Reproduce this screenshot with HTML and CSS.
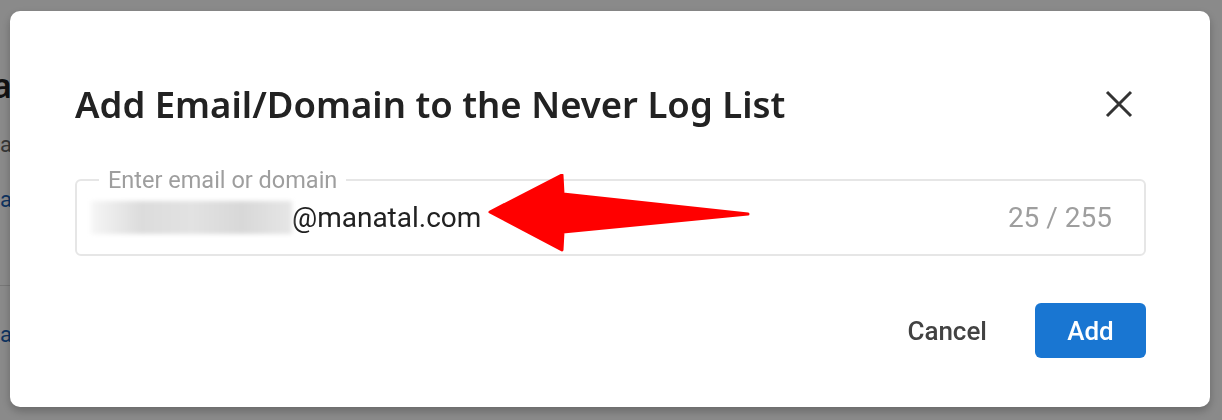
FILE: index.html
```html
<!DOCTYPE html>
<html lang="en">
<head>
  <meta charset="UTF-8" />
  <meta name="viewport" content="width=device-width, initial-scale=1" />
  <title>Never Log List</title>
  <link rel="stylesheet" href="styles.css">
</head>
<body>
  <!-- Page behind the dialog -->
  <div class="page">
    <div class="page-edge">
      <div class="edge-row edge-title"><span>Never Log Data</span></div>
      <div class="edge-row edge-sub"><span>Emails never logged to data</span></div>
      <div class="edge-row edge-link"><span>Learn more idea</span></div>
      <div class="edge-rule"></div>
      <div class="edge-row edge-link edge-cell"><span>manata</span></div>
      <div class="edge-rule"></div>
    </div>
  </div>

  <div class="backdrop">
    <div class="dialog" role="dialog" aria-labelledby="dialogTitle">
      <div class="dialog-head">
        <h2 id="dialogTitle">Add Email/Domain to the Never Log List</h2>
        <button type="button" class="close-btn" aria-label="Close">
          <svg width="28" height="28" viewBox="0 0 28 28">
            <path d="M2 2 L26 26 M26 2 L2 26" stroke="#333" stroke-width="3" fill="none" />
          </svg>
        </button>
      </div>

      <fieldset class="field">
        <legend>Enter email or domain</legend>
        <div class="field-row">
          <span class="field-value"><span class="masked"></span>@manatal.com</span>
          <span class="counter">25 / 255</span>
        </div>
        <svg class="pointer" width="270" height="84" viewBox="0 0 270 84">
          <polygon points="6,38 78,1 79,20 264,40 79,58 78,76" fill="#ff0000" stroke="#ff0000" stroke-width="3" stroke-linejoin="round" />
        </svg>
      </fieldset>

      <div class="dialog-actions">
        <button type="button" class="btn-text">Cancel</button>
        <button type="submit" class="btn-primary">Add</button>
      </div>
    </div>
  </div>
</body>
</html>
```

FILE: styles.css
```css
/* Base */
html, body {
  margin: 0;
  height: 100%;
}
body {
  font-family: Roboto, "Noto Sans", Arial, sans-serif;
  background-color: #fff;
  overflow: hidden;
}

/* Page content sticking out at the left edge */
.page {
  height: 100%;
}
.page-edge {
  width: 12px;
  overflow: hidden;
  padding-top: 62px;
}
.edge-row {
  display: flex;
  justify-content: flex-end;
  white-space: nowrap;
}
.edge-title {
  font-family: "Noto Sans", sans-serif;
  font-weight: 600;
  font-size: 34px;
  color: #222;
  height: 46px;
  line-height: 46px;
}
.edge-sub {
  font-size: 22px;
  color: #666;
  margin-top: 20px;
  height: 34px;
  line-height: 34px;
}
.edge-link {
  font-size: 22px;
  color: #1a5fb4;
  margin-top: 21px;
  height: 34px;
  line-height: 34px;
}
.edge-rule {
  height: 1px;
  background-color: #ddd;
  margin-top: 68px;
}
.edge-cell {
  margin-top: 32px;
  margin-bottom: 25px;
}

/* Dim layer and dialog */
.backdrop {
  position: fixed;
  inset: 0;
  background-color: rgba(0, 0, 0, 0.46);
}
.dialog {
  position: absolute;
  left: 10px;
  top: 11px;
  width: 1200px;
  height: 396px;
  box-sizing: border-box;
  background-color: #fff;
  border-radius: 10px;
  padding: 0 64px 0 65px;
  box-shadow: 0 4px 10px rgba(0, 0, 0, 0.25);
}
.dialog-head {
  display: flex;
  align-items: center;
  justify-content: space-between;
  height: 165px;
  padding-top: 20px;
  box-sizing: border-box;
}
.dialog-head h2 {
  margin: 0;
  font-family: "Noto Sans", sans-serif;
  font-weight: 600;
  font-size: 36.5px;
  color: #222;
}
.close-btn {
  background: none;
  border: none;
  padding: 0;
  margin-right: 13px;
  width: 28px;
  height: 28px;
  cursor: pointer;
}

/* Outlined text field */
.field {
  position: relative;
  margin: -8px 0 0;
  padding: 0 32px 0 14px;
  height: 88px;
  box-sizing: border-box;
  border: 2px solid #e6e6e6;
  border-radius: 6px;
  min-width: 0;
}
.field legend {
  margin-left: 8px;
  padding: 0 9px 0 9px;
  font-size: 23.5px;
  line-height: 24px;
  color: #9e9e9e;
}
.field-row {
  display: flex;
  align-items: center;
  justify-content: space-between;
  margin-top: 9px;
}
.field-value {
  display: flex;
  align-items: center;
  font-size: 28px;
  color: #212121;
}
.masked {
  display: inline-block;
  width: 201px;
  height: 33px;
  background: linear-gradient(90deg, #f6f6f6 0%, #dcdcdc 25%, #e2e2e2 50%, #d8d8d8 75%, #e6e6e6 100%);
  filter: blur(2px);
}
.counter {
  font-size: 28px;
  color: #9e9e9e;
}
.pointer {
  position: absolute;
  left: 407px;
  top: -18px;
}

/* Footer buttons */
.dialog-actions {
  display: flex;
  justify-content: flex-end;
  align-items: center;
  gap: 28px;
  margin-top: 47px;
}
.btn-text,
.btn-primary {
  font-family: Roboto, sans-serif;
  font-weight: 500;
  font-size: 26px;
  border: none;
  cursor: pointer;
}
.btn-text {
  background: none;
  color: #424242;
  padding: 0 20px;
  height: 55px;
}
.btn-primary {
  background-color: #1976d2;
  color: #fff;
  width: 111px;
  height: 55px;
  border-radius: 6px;
}
```
